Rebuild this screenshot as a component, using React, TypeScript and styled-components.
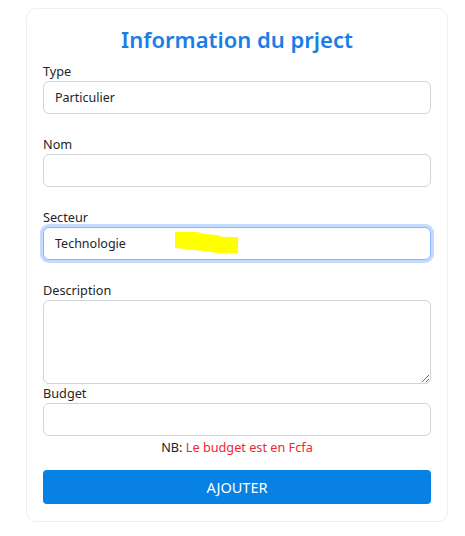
import React from "react";
import styled, { createGlobalStyle } from "styled-components";

const Global = createGlobalStyle`
  html, body { background: #ffffff; }
  body {
    margin: 0;
    font-family: "Noto Sans", "Liberation Sans", sans-serif;
    color: #212529;
  }
  * { box-sizing: border-box; }
`;

const Card = styled.form`
  width: 422px;
  margin: 8px 0 0 26px;
  padding: 15px 16px 17px 16px;
  border: 1px solid #efefef;
  border-radius: 10px;
  background: #ffffff;
  display: flex;
  flex-direction: column;
`;

const Title = styled.h2`
  margin: 0 0 8px;
  font-size: 22px;
  line-height: 30px;
  font-weight: 600;
  color: #1a7ee6;
  text-align: center;
`;

const Group = styled.div<{ $gap: number }>`
  display: flex;
  flex-direction: column;
  margin-bottom: ${(p) => p.$gap}px;
  position: relative;
`;

const Label = styled.label`
  font-size: 12.7px;
  line-height: 19px;
  color: #212529;
`;

const Input = styled.input<{ $focus?: boolean }>`
  height: 33px;
  width: 100%;
  padding: 0 11px;
  font-family: inherit;
  font-size: 12.5px;
  color: #212529;
  background: #fff;
  border: 1px solid ${(p) => (p.$focus ? "#86b7fe" : "#ced4da")};
  border-radius: 6px;
  outline: none;
  box-shadow: ${(p) => (p.$focus ? "0 0 0 3px rgba(13,110,253,0.25)" : "none")};
`;

const TextArea = styled.textarea`
  height: 84px;
  width: 100%;
  padding: 6px 11px;
  font-family: inherit;
  font-size: 12.5px;
  border: 1px solid #ced4da;
  border-radius: 6px;
  outline: none;
  display: block;
`;

const Highlight = styled.svg`
  position: absolute;
  left: 132px;
  top: 24px;
  pointer-events: none;
`;

const Note = styled.div`
  text-align: center;
  font-size: 12.7px;
  line-height: 21px;
  margin: 1px 0 12px;
  color: #212529;
`;

const Red = styled.span`
  color: #f2262f;
`;

const Button = styled.button`
  height: 34px;
  width: 100%;
  border: none;
  border-radius: 4px;
  background: #0781e3;
  color: #ffffff;
  font-family: inherit;
  font-size: 14.5px;
  cursor: pointer;
`;

export default function App() {
  return (
    <>
      <Global />
      <Card onSubmit={(e) => e.preventDefault()}>
        <Title>Information du prject</Title>
        <Group $gap={21}>
          <Label>Type</Label>
          <Input defaultValue="Particulier" />
        </Group>
        <Group $gap={21}>
          <Label>Nom</Label>
          <Input />
        </Group>
        <Group $gap={21}>
          <Label>Secteur</Label>
          <Input $focus defaultValue="Technologie" />
          <Highlight width="64" height="22" viewBox="0 0 64 22">
            <polygon points="0,0 22,0 30,2 42,3 48,5 63,5 63,21 42,21 28,19 0,16" fill="#ffff00" />
          </Highlight>
        </Group>
        <Group $gap={0}>
          <Label>Description</Label>
          <TextArea />
        </Group>
        <Group $gap={0}>
          <Label>Budget</Label>
          <Input />
        </Group>
        <Note>
          NB: <Red>Le budget est en Fcfa</Red>
        </Note>
        <Button type="submit">AJOUTER</Button>
      </Card>
    </>
  );
}
